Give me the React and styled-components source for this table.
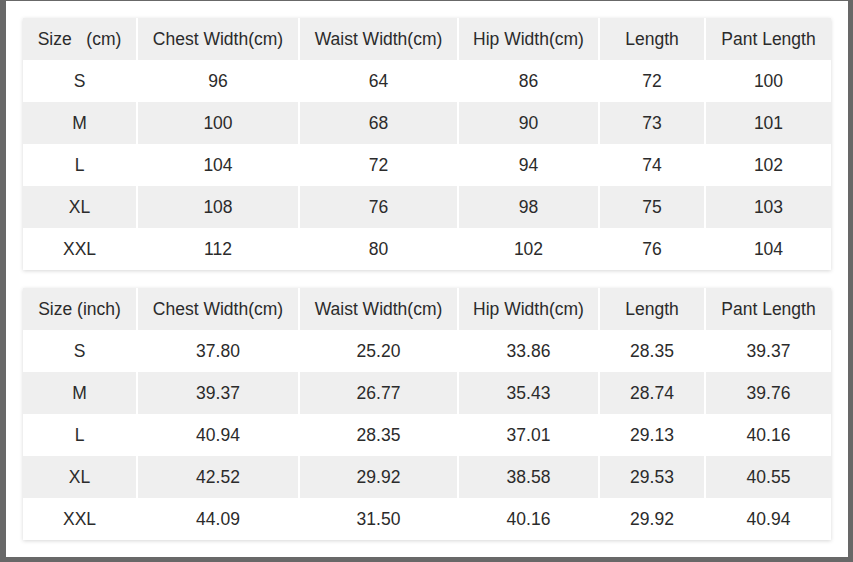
import React from "react";
import styled, { createGlobalStyle } from "styled-components";

const Global = createGlobalStyle`
  html, body { margin: 0; padding: 0; }
  body { background: #686868; font-family: "Liberation Sans", Arial, sans-serif; }
`;

const Page = styled.div`
  box-sizing: border-box;
  width: 853px;
  height: 562px;
  padding: 1px 5px 5px 6px;
  background: #686868;
`;

const Panel = styled.div`
  box-sizing: border-box;
  height: 100%;
  background: #ffffff;
  padding: 17px 17px 17px 17px;
  display: flex;
  flex-direction: column;
  gap: 18px;
`;

const Card = styled.div`
  background: #ffffff;
  box-shadow: 0 1px 4px rgba(0, 0, 0, 0.16);
  display: grid;
  grid-template-columns: 113px 160px 157px 139px 104px 125px;
  column-gap: 2px;
`;

const Cell = styled.div`
  height: 42px;
  display: flex;
  align-items: center;
  justify-content: center;
  background: ${(p) => (p.$shaded ? "#efefef" : "#ffffff")};
  color: #2b2b2b;
  font-size: 17.5px;
  white-space: pre;
`;

const headers1 = ["Size   (cm)", "Chest Width(cm)", "Waist Width(cm)", "Hip Width(cm)", "Length", "Pant Length"];
const headers2 = ["Size (inch)", "Chest Width(cm)", "Waist Width(cm)", "Hip Width(cm)", "Length", "Pant Length"];

const rows1 = [
  ["S", "96", "64", "86", "72", "100"],
  ["M", "100", "68", "90", "73", "101"],
  ["L", "104", "72", "94", "74", "102"],
  ["XL", "108", "76", "98", "75", "103"],
  ["XXL", "112", "80", "102", "76", "104"],
];

const rows2 = [
  ["S", "37.80", "25.20", "33.86", "28.35", "39.37"],
  ["M", "39.37", "26.77", "35.43", "28.74", "39.76"],
  ["L", "40.94", "28.35", "37.01", "29.13", "40.16"],
  ["XL", "42.52", "29.92", "38.58", "29.53", "40.55"],
  ["XXL", "44.09", "31.50", "40.16", "29.92", "40.94"],
];

function SizeTable({ headers, rows }) {
  const all = [headers, ...rows];
  return (
    <Card>
      {all.map((r, ri) =>
        r.map((c, ci) => (
          <Cell key={`${ri}-${ci}`} $shaded={ri % 2 === 0}>
            {c}
          </Cell>
        ))
      )}
    </Card>
  );
}

export default function App() {
  return (
    <>
      <Global />
      <Page>
        <Panel>
          <SizeTable headers={headers1} rows={rows1} />
          <SizeTable headers={headers2} rows={rows2} />
        </Panel>
      </Page>
    </>
  );
}
